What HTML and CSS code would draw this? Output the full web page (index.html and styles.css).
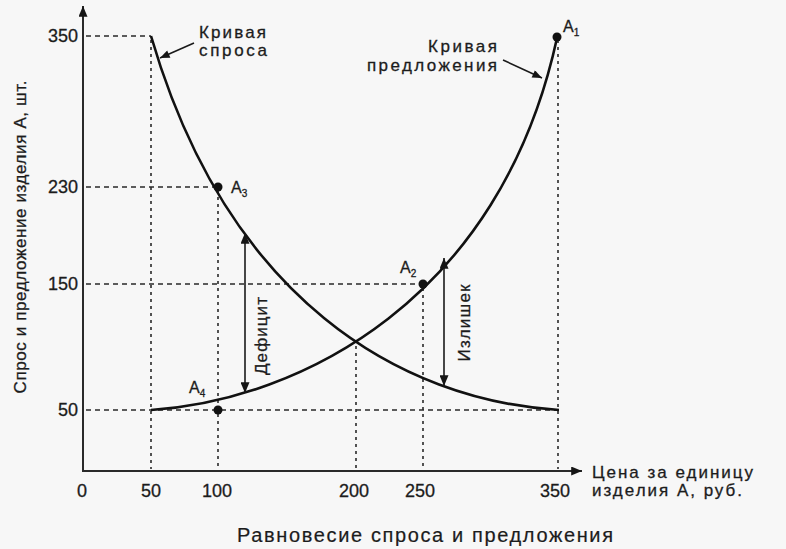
FILE: index.html
```html
<!DOCTYPE html>
<html lang="ru">
<head>
<meta charset="utf-8">
<title>Равновесие спроса и предложения</title>
<link rel="stylesheet" href="styles.css">
</head>
<body>
<main class="page">
<svg class="chart" width="786" height="549" viewBox="0 0 786 549" xmlns="http://www.w3.org/2000/svg">
  <defs>
    <marker id="ah" viewBox="0 0 12 10" refX="12" refY="5" markerWidth="12" markerHeight="9" markerUnits="userSpaceOnUse" orient="auto-start-reverse">
      <path d="M0,0 L12,5 L0,10 z" class="head"/>
    </marker>
    <marker id="ahs" viewBox="0 0 12 10" refX="12" refY="5" markerWidth="11" markerHeight="8" markerUnits="userSpaceOnUse" orient="auto">
      <path d="M0,0 L12,5 L0,10 z" class="head"/>
    </marker>
  </defs>

  <!-- guide lines -->
  <g class="hdash">
    <line x1="86" y1="36" x2="151" y2="36"/>
    <line x1="86" y1="187" x2="218" y2="187"/>
    <line x1="86" y1="284" x2="423" y2="284"/>
    <line x1="86" y1="410" x2="559" y2="410"/>
  </g>
  <g class="vdash">
    <line x1="151" y1="40" x2="151" y2="469"/>
    <line x1="218" y1="190" x2="218" y2="469"/>
    <line x1="356" y1="346" x2="356" y2="469"/>
    <line x1="423" y1="288" x2="423" y2="469"/>
    <line x1="558" y1="40" x2="558" y2="469"/>
  </g>

  <!-- axes -->
  <line class="axis" x1="83" y1="471" x2="83" y2="6" marker-end="url(#ah)"/>
  <line class="axis" x1="82" y1="471" x2="582" y2="471" marker-end="url(#ah)"/>

  <!-- curves -->
  <path class="curve" d="M151,36 C228,300 400,400 559,410"/>
  <path class="curve" d="M151,410 C300,400 500,300 557,38"/>

  <!-- points -->
  <circle class="dot" cx="218" cy="187" r="4.5"/>
  <circle class="dot" cx="423" cy="284" r="4.5"/>
  <circle class="dot" cx="218" cy="410" r="4.5"/>
  <circle class="dot" cx="557" cy="37" r="4.5"/>

  <!-- gap arrows -->
  <line class="gap" x1="245" y1="233" x2="245" y2="393" marker-start="url(#ah)" marker-end="url(#ah)"/>
  <line class="gap" x1="444" y1="258" x2="444" y2="386" marker-start="url(#ah)" marker-end="url(#ah)"/>

  <!-- callouts -->
  <line class="callout" x1="194" y1="43" x2="160" y2="58" marker-end="url(#ahs)"/>
  <line class="callout" x1="503" y1="60" x2="542" y2="78" marker-end="url(#ahs)"/>

  <!-- axis numbers -->
  <g class="num ynum">
    <text x="78" y="42">350</text>
    <text x="78" y="193">230</text>
    <text x="78" y="290">150</text>
    <text x="78" y="416">50</text>
  </g>
  <g class="num xnum">
    <text x="82" y="497">0</text>
    <text x="151" y="497">50</text>
    <text x="217" y="497">100</text>
    <text x="354" y="497">200</text>
    <text x="420" y="497">250</text>
    <text x="555" y="497">350</text>
  </g>

  <!-- labels -->
  <g class="label">
    <text x="199" y="38" textLength="67" lengthAdjust="spacing">Кривая</text>
    <text x="199" y="56" textLength="68" lengthAdjust="spacing">спроса</text>
  </g>
  <g class="label end">
    <text x="497" y="52" textLength="69" lengthAdjust="spacing">Кривая</text>
    <text x="497" y="71" textLength="130" lengthAdjust="spacing">предложения</text>
  </g>
  <g class="label">
    <text x="592" y="478" textLength="161" lengthAdjust="spacing">Цена за единицу</text>
    <text x="592" y="496" textLength="150" lengthAdjust="spacing">изделия А, руб.</text>
  </g>

  <text class="label ytitle" transform="translate(26 237) rotate(-90)" x="0" y="0" textLength="313" lengthAdjust="spacing">Спрос и предложение изделия А, шт.</text>
  <text class="label vlabel" transform="translate(267 336) rotate(-90)" x="0" y="0" textLength="78" lengthAdjust="spacing">Дефицит</text>
  <text class="label vlabel" transform="translate(470 323) rotate(-90)" x="0" y="0" textLength="77" lengthAdjust="spacing">Излишек</text>

  <g class="pt">
    <text x="231" y="193">A<tspan class="sub" dy="4">3</tspan></text>
    <text x="400" y="273">A<tspan class="sub" dy="4">2</tspan></text>
    <text x="189" y="393">A<tspan class="sub" dy="4">4</tspan></text>
    <text x="563" y="32">A<tspan class="sub" dy="4">1</tspan></text>
  </g>

  <text class="title" x="237" y="542" textLength="376" lengthAdjust="spacing">Равновесие спроса и предложения</text>
</svg>
</main>
</body>
</html>
```

FILE: styles.css
```css
html, body {
  margin: 0;
  padding: 0;
  background: #f7f7f7;
}

.page {
  width: 786px;
  height: 549px;
  overflow: hidden;
}

.chart {
  display: block;
  font-family: "Liberation Sans", Arial, sans-serif;
}

.head {
  fill: #151515;
}

.axis {
  stroke: #2a2a2a;
  stroke-width: 2;
}

.hdash line {
  stroke: #2a2a2a;
  stroke-width: 1.6;
  stroke-dasharray: 5 4;
}

.vdash line {
  stroke: #2a2a2a;
  stroke-width: 1.6;
  stroke-dasharray: 3 4;
}

.curve {
  fill: none;
  stroke: #111;
  stroke-width: 2.6;
}

.dot {
  fill: #111;
}

.gap {
  stroke: #1a1a1a;
  stroke-width: 1.6;
}

.callout {
  stroke: #1a1a1a;
  stroke-width: 1.6;
}

.num {
  fill: #1c1c1c;
  font-size: 18px;
  stroke: #1c1c1c;
  stroke-width: 0.3px;
}

.ynum {
  text-anchor: end;
}

.xnum {
  text-anchor: middle;
}

.label {
  fill: #1c1c1c;
  font-size: 17px;
  stroke: #1c1c1c;
  stroke-width: 0.3px;
}

.end {
  text-anchor: end;
}

.ytitle,
.vlabel {
  text-anchor: middle;
}

.pt {
  fill: #1c1c1c;
  font-size: 16px;
  stroke: #1c1c1c;
  stroke-width: 0.3px;
}

.sub {
  font-size: 10px;
}

.title {
  fill: #1c1c1c;
  font-size: 20px;
  stroke: #1c1c1c;
  stroke-width: 0.2px;
}
```
